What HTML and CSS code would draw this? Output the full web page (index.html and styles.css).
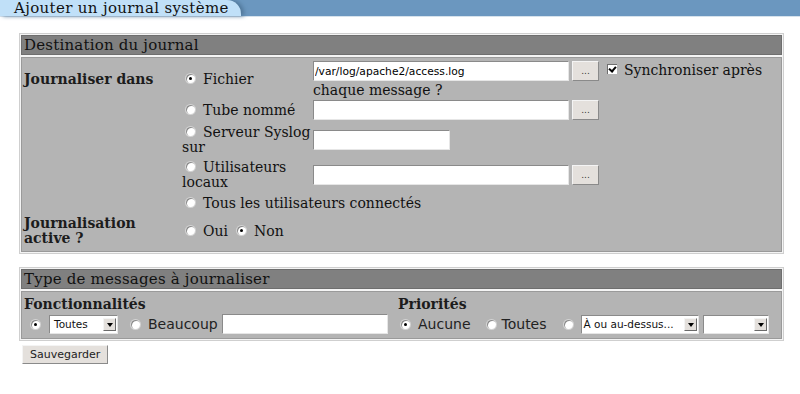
FILE: index.html
```html
<!DOCTYPE html>
<html>
<head>
<meta charset="utf-8">
<link rel="stylesheet" href="styles.css">
</head>
<body>
<div class="topbar"><div class="tab">Ajouter un journal système</div></div>
<div class="page">
  <div class="panel">
    <div class="phead">Destination du journal</div>
    <div class="pbody">
      <table class="dest">
        <tr class="r1">
          <td class="lbl">Journaliser dans</td>
          <td class="opt"><span class="radio on"></span>Fichier</td>
          <td class="fld"><input class="txt wide" type="text" value="/var/log/apache2/access.log"><button class="dots" type="button">...</button><span class="check"></span>Synchroniser après<br>chaque message ?</td>
        </tr>
        <tr class="r2">
          <td></td>
          <td class="opt"><span class="radio"></span>Tube nommé</td>
          <td class="fld"><input class="txt wide" type="text"><button class="dots" type="button">...</button></td>
        </tr>
        <tr class="r3">
          <td></td>
          <td class="opt"><span class="radio"></span>Serveur Syslog<br>sur</td>
          <td class="fld"><input class="txt short" type="text"></td>
        </tr>
        <tr class="r4">
          <td></td>
          <td class="opt"><span class="radio"></span>Utilisateurs<br>locaux</td>
          <td class="fld"><input class="txt wide" type="text"><button class="dots" type="button">...</button></td>
        </tr>
        <tr class="r5">
          <td></td>
          <td class="opt" colspan="2"><span class="radio"></span>Tous les utilisateurs connectés</td>
        </tr>
        <tr class="r6">
          <td class="lbl">Journalisation<br>active ?</td>
          <td class="opt" colspan="2"><span class="radio"></span>Oui<span class="radio on after"></span>Non</td>
        </tr>
      </table>
    </div>
  </div>

  <div class="panel second">
    <div class="phead">Type de messages à journaliser</div>
    <div class="pbody types">
      <div class="col left">
        <div class="lbl">Fonctionnalités</div>
        <div class="ctl">
          <span class="radio on r-a"></span>
          <span class="sel s1"><span class="seltext">Toutes</span><span class="arrow"></span></span>
          <span class="radio r-b"></span>
          <span class="sans">Beaucoup</span>
          <input class="txt mid" type="text">
        </div>
      </div>
      <div class="col right">
        <div class="lbl">Priorités</div>
        <div class="ctl">
          <span class="radio on r-c"></span>
          <span class="sans">Aucune</span>
          <span class="radio r-d"></span>
          <span class="sans">Toutes</span>
          <span class="radio r-e"></span>
          <span class="sel s2"><span class="seltext">À ou au-dessus...</span><span class="arrow"></span></span>
          <span class="sel s3"><span class="seltext"></span><span class="arrow"></span></span>
        </div>
      </div>
    </div>
  </div>
  <button class="save" type="button">Sauvegarder</button>
</div>
</body>
</html>
```

FILE: styles.css
```css
html, body {
  margin: 0;
  padding: 0;
  background: #ffffff;
}
body {
  font-family: "DejaVu Serif", serif;
  font-size: 14px;
  line-height: 15px;
  color: #111;
}
.topbar {
  height: 16px;
  background: #6b97bf;
  border-bottom: 1px solid #d6e2ec;
  display: flex;
}
.tab {
  width: 227px;
  padding-left: 14px;
  height: 16px;
  line-height: 16px;
  background: #c0e0f8;
  border-top-right-radius: 14px;
  box-shadow: 3px 0 4px #4f7698;
  font-size: 15px;
  letter-spacing: 0.35px;
  color: #111;
  white-space: nowrap;
}
.page {
  padding: 16px 18px 0 19px;
}
.panel {
  width: 761px;
  border: 1px solid #cfcfcf;
  padding: 1px;
  background: #f4f4f4;
}
.phead {
  height: 18px;
  line-height: 18px;
  background: #808080;
  border: 1px solid #6e6e6e;
  padding-left: 2px;
  font-size: 15px;
  letter-spacing: 0.2px;
  color: #111;
}
.pbody {
  margin-top: 2px;
  background: #b4b4b4;
  border: 1px solid #9a9a9a;
}
.dest {
  border-collapse: collapse;
  table-layout: fixed;
  width: 745px;
  margin: 2px 0 3px 2px;
}
.dest td {
  padding: 0;
  vertical-align: middle;
  white-space: nowrap;
}
.dest td.lbl {
  font-weight: bold;
  color: #1c1c1c;
}
.dest tr > td:first-child { width: 158px; }
.dest td.opt { width: 131px; }
.dest td.fld { line-height: 16px; }
.r1 { height: 38px; }
.r2 { height: 24px; }
.r3 { height: 36px; }
.r4 { height: 34px; }
.r5 { height: 22px; }
.r6 { height: 34px; }
.radio {
  display: inline-block;
  position: relative;
  width: 9px;
  height: 9px;
  border-radius: 50%;
  background: #ffffff;
  box-shadow: inset 1px 1px 0 #8c8c8c, 0 0 0 1px #d4d4d4;
  vertical-align: 1px;
  margin-right: 8px;
}
.dest .radio { margin-left: 4px; }
.dest .radio.after { margin-left: 9px; }
.radio.on::after {
  content: "";
  position: absolute;
  left: 3px;
  top: 3px;
  width: 3px;
  height: 3px;
  border-radius: 50%;
  background: #000;
}
.check {
  display: inline-block;
  position: relative;
  width: 10px;
  height: 10px;
  background: #fff;
  box-shadow: inset 1px 1px 0 #6e6e6e;
  vertical-align: 1px;
  margin-left: 8px;
  margin-right: 7px;
}
.check::after {
  content: "";
  position: absolute;
  left: 3px;
  top: 1px;
  width: 3px;
  height: 5px;
  border: solid #000;
  border-width: 0 2px 2px 0;
  transform: rotate(40deg);
}
.txt {
  box-sizing: border-box;
  height: 20px;
  margin: 1px 0;
  padding: 0 1px;
  background: #fff;
  border: 1px solid;
  border-color: #8a8a8a #e6e6e6 #e6e6e6 #8a8a8a;
  font-family: "DejaVu Sans", sans-serif;
  font-size: 10.7px;
  color: #000;
  vertical-align: middle;
}
.txt.wide { width: 256px; }
.txt.short { width: 137px; }
.txt.mid { width: 166px; margin-left: 4px; }
.dots {
  box-sizing: border-box;
  width: 27px;
  height: 20px;
  margin: 1px 0 1px 3px;
  padding: 0;
  background: #e4e0dc;
  border: 1px solid;
  border-color: #f4f4f4 #8a8a8a #8a8a8a #f4f4f4;
  font-family: "DejaVu Sans", sans-serif;
  font-size: 9px;
  color: #333;
  vertical-align: middle;
}
.types {
  display: flex;
  padding: 3px 0 3px 2px;
}
.col.left { width: 374px; }
.col .lbl {
  font-weight: bold;
  color: #1c1c1c;
  line-height: 18px;
}
.ctl {
  display: flex;
  align-items: center;
  height: 22px;
  padding-left: 7px;
}
.col.right .ctl { padding-left: 3px; }
.ctl .radio { vertical-align: 0; }
.ctl .r-a { margin-right: 9px; }
.ctl .r-b { margin-left: 13px; margin-right: 8px; }
.ctl .r-c { margin-right: 8px; }
.ctl .r-d { margin-left: 16px; margin-right: 6px; }
.ctl .r-e { margin-left: 17px; margin-right: 8px; }
.sans {
  font-family: "DejaVu Sans", sans-serif;
  font-size: 14px;
  color: #222;
}
.sel {
  box-sizing: border-box;
  display: inline-flex;
  align-items: center;
  justify-content: space-between;
  height: 19px;
  background: #fff;
  border: 1px solid;
  border-color: #8a8a8a #e6e6e6 #e6e6e6 #8a8a8a;
  font-family: "DejaVu Sans", sans-serif;
  font-size: 10.5px;
  color: #111;
  padding: 0 1px 0 4px;
  white-space: nowrap;
}
.s1 { width: 69px; }
.s2 { width: 118px; margin-right: 4px; padding-left: 2px; }
.s3 { width: 66px; }
.arrow {
  position: relative;
  flex: none;
  width: 13px;
  height: 13px;
  box-sizing: border-box;
  background: #e4e0dc;
  border: 1px solid;
  border-color: #f4f4f4 #6a6a6a #6a6a6a #f4f4f4;
}
.arrow::after {
  content: "";
  position: absolute;
  left: 3px;
  top: 4px;
  border-left: 3px solid transparent;
  border-right: 3px solid transparent;
  border-top: 4px solid #000;
}
.second { margin-top: 13px; }
.save {
  display: block;
  margin-top: 4px;
  margin-left: 3px;
  height: 19px;
  padding: 0 7px;
  background: #e4e0dc;
  border: 1px solid;
  border-color: #f4f4f4 #8a8a8a #8a8a8a #f4f4f4;
  font-family: "DejaVu Sans", sans-serif;
  font-size: 11px;
  color: #222;
}
```
